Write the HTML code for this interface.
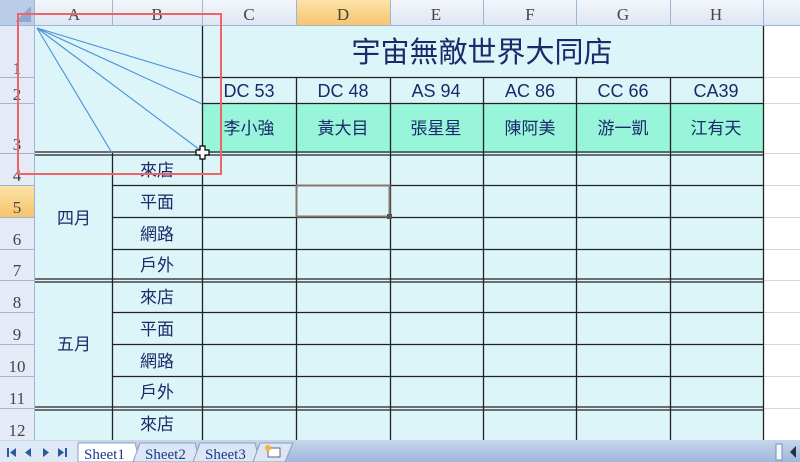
<!DOCTYPE html>
<html><head><meta charset="utf-8"><style>
html,body{margin:0;padding:0;width:800px;height:462px;overflow:hidden;background:#fff}
svg{display:block}
text{font-family:"Liberation Sans","Noto Sans CJK TC",sans-serif;fill:#1a2a6a}
.h{font-family:"Liberation Serif",serif;fill:#444;font-size:17px}
</style></head><body>
<svg width="800" height="462" viewBox="0 0 800 462">
<defs>
<linearGradient id="hg" x1="0" y1="0" x2="0" y2="1"><stop offset="0" stop-color="#f3f6fb"/><stop offset="1" stop-color="#dde6f2"/></linearGradient>
<linearGradient id="og" x1="0" y1="0" x2="0" y2="1"><stop offset="0" stop-color="#fbe3a8"/><stop offset="1" stop-color="#f7c46c"/></linearGradient>
<linearGradient id="tb" x1="0" y1="0" x2="0" y2="1"><stop offset="0" stop-color="#c6d6ec"/><stop offset="1" stop-color="#9fb8dc"/></linearGradient>
</defs>
<!-- white area grid -->
<g stroke="#d0d7e5" stroke-width="1">
<line x1="763" y1="77.5" x2="800" y2="77.5"/><line x1="763" y1="103.5" x2="800" y2="103.5"/>
<line x1="763" y1="153.5" x2="800" y2="153.5"/><line x1="763" y1="185.5" x2="800" y2="185.5"/>
<line x1="763" y1="217.5" x2="800" y2="217.5"/><line x1="763" y1="249.5" x2="800" y2="249.5"/>
<line x1="763" y1="280.5" x2="800" y2="280.5"/><line x1="763" y1="312.5" x2="800" y2="312.5"/>
<line x1="763" y1="344.5" x2="800" y2="344.5"/><line x1="763" y1="376.5" x2="800" y2="376.5"/>
<line x1="763" y1="408.5" x2="800" y2="408.5"/>
</g>
<!-- data fill -->
<rect x="35" y="26" width="728" height="414" fill="#dcf5f8"/>
<rect x="202" y="103" width="561" height="50" fill="#98f5da"/>
<!-- headers -->
<rect x="0" y="0" width="800" height="26" fill="url(#hg)"/>
<rect x="296" y="0" width="94" height="26" fill="url(#og)"/>
<rect x="0" y="26" width="35" height="414" fill="#e4ebf6"/>
<rect x="0" y="185" width="35" height="32" fill="url(#og)"/>
<rect x="0" y="0" width="35" height="26" fill="#b9cde8"/>
<polygon points="31,6 31,22 15,22" fill="#8ea9cf"/>
<g stroke="#9eb6ce">
<line x1="0" y1="25.5" x2="800" y2="25.5"/><line x1="34.5" y1="0" x2="34.5" y2="440"/>
<line x1="112.5" y1="0" x2="112.5" y2="26"/><line x1="202.5" y1="0" x2="202.5" y2="26"/>
<line x1="296.5" y1="0" x2="296.5" y2="26"/><line x1="390.5" y1="0" x2="390.5" y2="26"/>
<line x1="483.5" y1="0" x2="483.5" y2="26"/><line x1="576.5" y1="0" x2="576.5" y2="26"/>
<line x1="670.5" y1="0" x2="670.5" y2="26"/><line x1="763.5" y1="0" x2="763.5" y2="26"/>
<line x1="0" y1="77.5" x2="35" y2="77.5"/><line x1="0" y1="103.5" x2="35" y2="103.5"/>
<line x1="0" y1="153.5" x2="35" y2="153.5"/><line x1="0" y1="185.5" x2="35" y2="185.5"/>
<line x1="0" y1="217.5" x2="35" y2="217.5"/><line x1="0" y1="249.5" x2="35" y2="249.5"/>
<line x1="0" y1="280.5" x2="35" y2="280.5"/><line x1="0" y1="312.5" x2="35" y2="312.5"/>
<line x1="0" y1="344.5" x2="35" y2="344.5"/><line x1="0" y1="376.5" x2="35" y2="376.5"/>
<line x1="0" y1="408.5" x2="35" y2="408.5"/>
</g>
<g class="h" text-anchor="middle">
<text class="h" x="74" y="20">A</text><text class="h" x="157" y="20">B</text>
<text class="h" x="249" y="20">C</text><text class="h" x="343" y="20">D</text>
<text class="h" x="436" y="20">E</text><text class="h" x="530" y="20">F</text>
<text class="h" x="623" y="20">G</text><text class="h" x="716" y="20">H</text>
<text class="h" x="17" y="74">1</text><text class="h" x="17" y="100">2</text>
<text class="h" x="17" y="150">3</text><text class="h" x="17" y="181">4</text>
<text class="h" x="17" y="213">5</text><text class="h" x="17" y="245">6</text>
<text class="h" x="17" y="276">7</text><text class="h" x="17" y="308">8</text>
<text class="h" x="17" y="340">9</text><text class="h" x="17" y="372">10</text>
<text class="h" x="17" y="404">11</text><text class="h" x="17" y="436">12</text>
</g>
<!-- borders -->
<g stroke="#222" stroke-width="1.3">
<line x1="202.5" y1="26" x2="202.5" y2="440"/>
<line x1="763.5" y1="26" x2="763.5" y2="440"/>
<line x1="112.5" y1="153" x2="112.5" y2="440"/>
<line x1="296.5" y1="77" x2="296.5" y2="440"/><line x1="390.5" y1="77" x2="390.5" y2="440"/>
<line x1="483.5" y1="77" x2="483.5" y2="440"/><line x1="576.5" y1="77" x2="576.5" y2="440"/>
<line x1="670.5" y1="77" x2="670.5" y2="440"/>
<line x1="202" y1="77.5" x2="763" y2="77.5"/><line x1="202" y1="103.5" x2="763" y2="103.5"/>
<line x1="35" y1="152" x2="763" y2="152"/><line x1="35" y1="155" x2="763" y2="155"/>
<line x1="112" y1="185.5" x2="763" y2="185.5"/><line x1="112" y1="217.5" x2="763" y2="217.5"/>
<line x1="112" y1="249.5" x2="763" y2="249.5"/>
<line x1="35" y1="279" x2="763" y2="279"/><line x1="35" y1="282" x2="763" y2="282"/>
<line x1="112" y1="312.5" x2="763" y2="312.5"/><line x1="112" y1="344.5" x2="763" y2="344.5"/>
<line x1="112" y1="376.5" x2="763" y2="376.5"/>
<line x1="35" y1="407" x2="763" y2="407"/><line x1="35" y1="410" x2="763" y2="410"/>
</g>
<rect x="296.5" y="185.5" width="93" height="31" fill="none" stroke="#8a7670" stroke-width="2"/>
<rect x="387" y="214" width="5" height="5" fill="#555"/>
<!-- diagonal -->
<g stroke="#4a8fd8" stroke-width="1.1">
<line x1="37" y1="28" x2="202" y2="78"/><line x1="37" y1="28" x2="202" y2="104"/>
<line x1="37" y1="28" x2="200" y2="150"/><line x1="37" y1="28" x2="112" y2="153"/>
</g>
<!-- text -->
<text x="482" y="62" font-size="29" text-anchor="middle">宇宙無敵世界大同店</text>
<g font-size="18" text-anchor="middle">
<text x="249" y="97">DC 53</text><text x="343" y="97">DC 48</text><text x="436" y="97">AS 94</text>
<text x="530" y="97">AC 86</text><text x="623" y="97">CC 66</text><text x="716" y="97">CA39</text>
</g>
<g font-size="17" text-anchor="middle">
<text x="249" y="134">李小強</text><text x="343" y="134">黃大目</text><text x="436" y="134">張星星</text>
<text x="530" y="134">陳阿美</text><text x="623" y="134">游一凱</text><text x="716" y="134">江有天</text>
<text x="157" y="176">來店</text><text x="157" y="208">平面</text><text x="157" y="240">網路</text><text x="157" y="271">戶外</text>
<text x="157" y="303">來店</text><text x="157" y="335">平面</text><text x="157" y="367">網路</text><text x="157" y="398">戶外</text>
<text x="157" y="430">來店</text>
<text x="74" y="224">四月</text><text x="74" y="350">五月</text>
</g>
<!-- red box -->
<rect x="18" y="14" width="203" height="160" fill="none" stroke="#f06464" stroke-width="2"/>
<!-- cursor -->
<path d="M200 146h5v4h4v5h-4v4h-5v-4h-4v-5h4z" fill="#fff" stroke="#000" stroke-width="1.2"/>
<!-- tab bar -->
<rect x="0" y="440" width="800" height="22" fill="url(#tb)"/>
<rect x="0" y="441" width="78" height="21" fill="#dfe8f5"/>
<g fill="#2a5aa0">
<rect x="7" y="448" width="2" height="9"/><polygon points="16,448 10,452.5 16,457"/>
<polygon points="31,448 25,452.5 31,457"/><polygon points="43,448 49,452.5 43,457"/>
<polygon points="58,448 64,452.5 58,457"/><rect x="65" y="448" width="2" height="9"/>
</g>
<polygon points="78,462 78,443 135,443 140,462" fill="#fff" stroke="#8aa0c0"/>
<polygon points="133,462 140,443 195,443 200,462" fill="#dce6f4" stroke="#8aa0c0"/>
<polygon points="193,462 200,443 255,443 260,462" fill="#dce6f4" stroke="#8aa0c0"/>
<polygon points="253,462 260,443 293,443 285,462" fill="#dce6f4" stroke="#8aa0c0"/>
<rect x="268" y="448" width="12" height="9" fill="#fff" stroke="#667"/>
<circle cx="268" cy="448" r="3" fill="#f4b830"/>
<g font-family="Liberation Serif" font-size="15" fill="#1a3a8a">
<text x="84" y="459" style="font-family:'Liberation Serif',serif;fill:#1a3a8a">Sheet1</text>
<text x="145" y="459" style="font-family:'Liberation Serif',serif;fill:#1a3a8a">Sheet2</text>
<text x="205" y="459" style="font-family:'Liberation Serif',serif;fill:#1a3a8a">Sheet3</text>
</g>
<rect x="776" y="444" width="6" height="16" fill="#f4f7fb" stroke="#7a90b0"/>
<polygon points="796,446 790,452 796,458" fill="#234"/>
</svg>
</body></html>
